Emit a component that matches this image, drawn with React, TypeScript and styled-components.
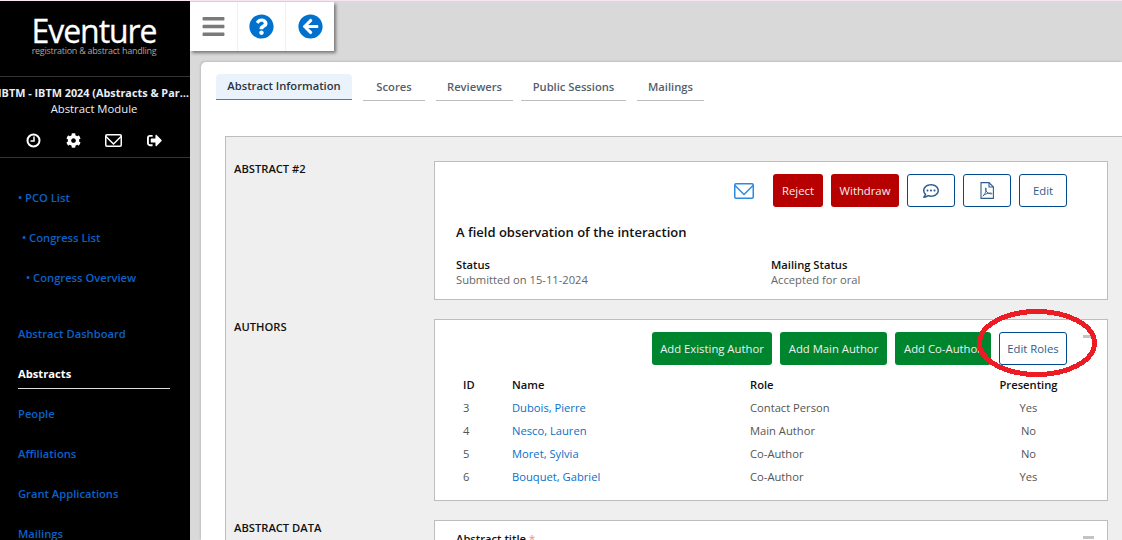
import React from 'react';
import styled, { createGlobalStyle } from 'styled-components';
import {
  FaBars,
  FaQuestionCircle,
  FaArrowCircleLeft,
  FaCog,
  FaSignOutAlt,
  FaRegCommentDots,
} from 'react-icons/fa';

const GlobalStyle = createGlobalStyle`
  html, body {
    margin: 0;
    padding: 0;
    height: 540px;
    overflow: hidden;
    background: #d9d9d9;
    font-family: "Open Sans", "Liberation Sans", sans-serif;
  }
  * { box-sizing: border-box; }
`;

const Page = styled.div`
  display: flex;
  width: 1122px;
  height: 540px;
  overflow: hidden;
  border-top: 1px solid #f5e6f2;
  position: relative;
`;

const Sidebar = styled.aside`
  width: 190px;
  flex: none;
  background: #000;
  color: #fff;
  display: flex;
  flex-direction: column;
  overflow: hidden;
  & > * { flex: none; }
`;

const LogoBlock = styled.div`
  height: 76px;
  border-bottom: 1px solid #333;
  display: flex;
  flex-direction: column;
  align-items: center;
  padding: 15px 2px 0 0;
`;

const LogoName = styled.div`
  font-size: 32px;
  line-height: 29px;
  letter-spacing: -1.05px;
  -webkit-text-stroke: 0.3px #fff;
  color: #fff;
`;

const LogoSub = styled.div`
  font-size: 9px;
  line-height: 11px;
  letter-spacing: -0.25px;
  color: #a6a6a6;
`;

const CongressTitle = styled.div`
  margin: 8px 0 0 -2px;
  font-size: 10.85px;
  line-height: 16px;
  font-weight: 700;
  white-space: nowrap;
  overflow: hidden;
  text-overflow: ellipsis;
  color: #e8eef8;
`;

const ModuleName = styled.div`
  text-align: center;
  font-size: 11.3px;
  line-height: 16px;
  margin-left: -2px;
  color: #e8eef8;
`;

const IconRow = styled.div`
  height: 41px;
  padding: 6px 28px 0 26px;
  border-bottom: 1px solid #333;
  display: flex;
  align-items: center;
  justify-content: space-between;
  font-size: 15px;
  color: #fff;
`;

const Nav = styled.nav`
  display: flex;
  flex-direction: column;
  padding-top: 20px;
`;

const NavItem = styled.a<{ $indent?: number; $active?: boolean; $gap?: boolean }>`
  display: block;
  height: ${(p) => (p.$active ? '35px' : '40px')};
  line-height: 40px;
  font-size: 11.2px;
  font-weight: ${(p) => (p.$active ? 700 : 600)};
  color: ${(p) => (p.$active ? '#fff' : '#0a62c9')};
  margin-left: ${(p) => 18 + (p.$indent || 0)}px;
  margin-top: ${(p) => (p.$gap ? '16px' : '0')};
  margin-bottom: ${(p) => (p.$active ? '5px' : '0')};
  width: ${(p) => (p.$active ? '152px' : 'auto')};
  border-bottom: ${(p) => (p.$active ? '1px solid #ddd' : 'none')};
`;

const Main = styled.main`
  flex: 1;
  min-width: 0;
  background: #d9d9d9;
  display: flex;
  flex-direction: column;
`;

const Toolbar = styled.div`
  width: 144px;
  height: 49px;
  flex: none;
  margin-top: 1px;
  background: #fff;
  display: flex;
  box-shadow: 2px 2px 3px rgba(0, 0, 0, 0.45);
`;

const ToolButton = styled.div<{ $color: string }>`
  width: 48px;
  display: flex;
  align-items: center;
  justify-content: center;
  color: ${(p) => p.$color};
  border-right: 1px solid #f0f0f0;
  font-size: 25px;
  &:last-child { border-right: none; }
`;

const Card = styled.div`
  margin: 11px 0 0 11px;
  flex: 1;
  background: #fff;
  border-radius: 5px 0 0 0;
  padding: 12px 0 0 15px;
  box-shadow: -1px -1px 2px rgba(0, 0, 0, 0.12);
  min-height: 0;
`;

const Tabs = styled.div`
  display: flex;
  height: 27px;
`;

const Tab = styled.div<{ $active?: boolean; $gap?: number; $width: number }>`
  width: ${(p) => p.$width}px;
  margin-right: ${(p) => p.$gap ?? 11}px;
  height: ${(p) => (p.$active ? '26px' : '27px')};
  line-height: ${(p) => (p.$active ? '24px' : '26px')};
  text-align: center;
  font-size: 11.2px;
  font-weight: 600;
  white-space: nowrap;
  color: ${(p) => (p.$active ? '#2a3440' : '#55606c')};
  background: ${(p) => (p.$active ? '#eaf3fb' : 'transparent')};
  border-bottom: 1px solid ${(p) => (p.$active ? '#2b84d0' : '#bdbdbd')};
  border-radius: 4px 4px 0 0;
`;

const GrayPanel = styled.div`
  margin: 35px 0 0 9px;
  background: #efefef;
  border: 1px solid #bdbdbd;
  border-right: none;
  padding: 24px 14px 0 8px;
  display: flex;
  flex-direction: column;
  gap: 19px;
`;

const Section = styled.section`
  display: flex;
`;

const SectionLabel = styled.div`
  width: 200px;
  flex: none;
  font-size: 11.2px;
  line-height: 16px;
  font-weight: 600;
  color: #111;
`;

const Box = styled.div<{ $height: number }>`
  position: relative;
  width: 674px;
  height: ${(p) => p.$height}px;
  background: #fff;
  border: 1px solid #bdbdbd;
`;

const AbstractBox = styled(Box)`
  padding: 12px 40px 0 21px;
`;

const ActionRow = styled.div`
  display: flex;
  justify-content: flex-end;
  align-items: center;
  gap: 8px;
`;

const ActionButton = styled.div<{ $kind: 'red' | 'green' | 'outline'; $width: number }>`
  height: 33px;
  width: ${(p) => p.$width}px;
  display: flex;
  align-items: center;
  justify-content: center;
  border-radius: 3px;
  font-size: 11.3px;
  white-space: nowrap;
  background: ${(p) => (p.$kind === 'red' ? '#b70000' : p.$kind === 'green' ? '#00852f' : '#fff')};
  color: ${(p) => (p.$kind === 'outline' ? '#2f5d8c' : '#f0f0f0')};
  border: 1px solid ${(p) => (p.$kind === 'outline' ? '#004b8d' : 'transparent')};
`;

const MailIcon = styled.div`
  margin-right: 11px;
  color: #2b8ae0;
  display: flex;
`;

const AbstractTitle = styled.div`
  margin-top: 16px;
  font-size: 13px;
  line-height: 18px;
  font-weight: 600;
  color: #111;
`;

const StatusGrid = styled.div`
  margin-top: 16px;
  display: grid;
  grid-template-columns: 315px 1fr;
`;

const StatusLabel = styled.div`
  font-size: 11.2px;
  line-height: 15px;
  font-weight: 600;
  color: #111;
`;

const StatusValue = styled.div`
  font-size: 11.2px;
  line-height: 15px;
  color: #666;
`;

const AuthorsBox = styled(Box)`
  padding: 12px 40px 0 0;
`;

const Collapse = styled.div`
  position: absolute;
  right: 13px;
  top: 15px;
  width: 11px;
  height: 3px;
  background: #c4c4c4;
`;

const AuthorTable = styled.table`
  margin: 8px 0 0 18px;
  border-collapse: collapse;
  table-layout: fixed;
  width: 646px;
  font-size: 11.2px;
`;

const Head = styled.th<{ $width: number; $center?: boolean }>`
  width: ${(p) => p.$width}px;
  height: 23px;
  padding: 0 0 0 ${(p) => (p.$center ? 0 : 10)}px;
  text-align: ${(p) => (p.$center ? 'center' : 'left')};
  font-weight: 600;
  color: #111;
`;

const Cell = styled.td<{ $center?: boolean }>`
  height: 23px;
  padding: 0 0 0 ${(p) => (p.$center ? 0 : 10)}px;
  text-align: ${(p) => (p.$center ? 'center' : 'left')};
  color: #555;
`;

const AuthorLink = styled.a`
  color: #0a6fc9;
`;

const FieldLabel = styled.div`
  padding: 10px 0 0 21px;
  font-size: 11.2px;
  font-weight: 600;
  line-height: 16px;
  color: #111;
  span { color: #e88; font-weight: 400; }
`;

const RedCircle = styled.svg`
  position: absolute;
  left: 972px;
  top: 304px;
  width: 130px;
  height: 76px;
  pointer-events: none;
`;

const ClockIcon = () => (
  <svg width="15" height="15" viewBox="0 0 15 15" fill="none" stroke="currentColor" strokeWidth="2">
    <circle cx="7.5" cy="7.5" r="6" />
    <path d="M8 3.5v4.5H4.5" strokeWidth="1.5" />
  </svg>
);

const EnvelopeIcon = ({ w, h }: { w: number; h: number }) => (
  <svg width={w} height={h} viewBox={`0 0 ${w} ${h}`} fill="none" stroke="currentColor" strokeWidth="1.5">
    <rect x="0.75" y="0.75" width={w - 1.5} height={h - 1.5} rx="1.2" />
    <path d={`M1 2.5l${w / 2 - 1} ${h / 2 + 1}l${w / 2 - 1} -${h / 2 + 1}`} />
  </svg>
);

const PdfIcon = () => (
  <svg width="14" height="17" viewBox="0 0 14 17" fill="none" stroke="currentColor" strokeWidth="1.1">
    <path d="M1 .6h8l4.4 4.4v11.4H1z" />
    <path d="M9 .6v4.4h4.4" />
    <path d="M2.6 14.2c2-1 3.4-4 3.6-7.6 .1-1-.9-1-.8.2 .3 2.4 2 4.8 5.6 5.2 1.2 .1 1.2-1-.2-1-2.2 0-5.2 .8-7.6 2.4" strokeWidth="0.9" />
  </svg>
);

const authors = [
  { id: 3, name: 'Dubois, Pierre', role: 'Contact Person', presenting: 'Yes' },
  { id: 4, name: 'Nesco, Lauren', role: 'Main Author', presenting: 'No' },
  { id: 5, name: 'Moret, Sylvia', role: 'Co-Author', presenting: 'No' },
  { id: 6, name: 'Bouquet, Gabriel', role: 'Co-Author', presenting: 'Yes' },
];

export default function App() {
  return (
    <Page>
      <GlobalStyle />
      <Sidebar>
        <LogoBlock>
          <LogoName>Eventure</LogoName>
          <LogoSub>registration &amp; abstract handling</LogoSub>
        </LogoBlock>
        <CongressTitle>IBTM - IBTM 2024 (Abstracts &amp; Participants)</CongressTitle>
        <ModuleName>Abstract Module</ModuleName>
        <IconRow>
          <ClockIcon />
          <FaCog />
          <EnvelopeIcon w={17} h={13} />
          <FaSignOutAlt />
        </IconRow>
        <Nav>
          <NavItem>• PCO List</NavItem>
          <NavItem $indent={4}>• Congress List</NavItem>
          <NavItem $indent={8}>• Congress Overview</NavItem>
          <NavItem $gap>Abstract Dashboard</NavItem>
          <NavItem $active>Abstracts</NavItem>
          <NavItem>People</NavItem>
          <NavItem>Affiliations</NavItem>
          <NavItem>Grant Applications</NavItem>
          <NavItem>Mailings</NavItem>
        </Nav>
      </Sidebar>
      <Main>
        <Toolbar>
          <ToolButton $color="#7a7a7a"><FaBars /></ToolButton>
          <ToolButton $color="#0072ce"><FaQuestionCircle /></ToolButton>
          <ToolButton $color="#0072ce"><FaArrowCircleLeft /></ToolButton>
        </Toolbar>
        <Card>
          <Tabs>
            <Tab $active $width={136}>Abstract Information</Tab>
            <Tab $width={62}>Scores</Tab>
            <Tab $width={77} $gap={8}>Reviewers</Tab>
            <Tab $width={105}>Public Sessions</Tab>
            <Tab $width={67}>Mailings</Tab>
          </Tabs>
          <GrayPanel>
            <Section>
              <SectionLabel>ABSTRACT #2</SectionLabel>
              <AbstractBox $height={139}>
                <ActionRow>
                  <MailIcon><EnvelopeIcon w={20} h={16} /></MailIcon>
                  <ActionButton $kind="red" $width={50}>Reject</ActionButton>
                  <ActionButton $kind="red" $width={68}>Withdraw</ActionButton>
                  <ActionButton $kind="outline" $width={48}><FaRegCommentDots size={16} /></ActionButton>
                  <ActionButton $kind="outline" $width={48}><PdfIcon /></ActionButton>
                  <ActionButton $kind="outline" $width={48}>Edit</ActionButton>
                </ActionRow>
                <AbstractTitle>A field observation of the interaction</AbstractTitle>
                <StatusGrid>
                  <StatusLabel>Status</StatusLabel>
                  <StatusLabel>Mailing Status</StatusLabel>
                  <StatusValue>Submitted on 15-11-2024</StatusValue>
                  <StatusValue>Accepted for oral</StatusValue>
                </StatusGrid>
              </AbstractBox>
            </Section>
            <Section>
              <SectionLabel>AUTHORS</SectionLabel>
              <AuthorsBox $height={182}>
                <ActionRow>
                  <ActionButton $kind="green" $width={120}>Add Existing Author</ActionButton>
                  <ActionButton $kind="green" $width={107}>Add Main Author</ActionButton>
                  <ActionButton $kind="green" $width={96}>Add Co-Author</ActionButton>
                  <ActionButton $kind="outline" $width={68}>Edit Roles</ActionButton>
                </ActionRow>
                <Collapse />
                <AuthorTable>
                  <thead>
                    <tr>
                      <Head $width={49}>ID</Head>
                      <Head $width={238}>Name</Head>
                      <Head $width={218}>Role</Head>
                      <Head $width={141} $center>Presenting</Head>
                    </tr>
                  </thead>
                  <tbody>
                    {authors.map((a) => (
                      <tr key={a.id}>
                        <Cell>{a.id}</Cell>
                        <Cell><AuthorLink>{a.name}</AuthorLink></Cell>
                        <Cell>{a.role}</Cell>
                        <Cell $center>{a.presenting}</Cell>
                      </tr>
                    ))}
                  </tbody>
                </AuthorTable>
              </AuthorsBox>
            </Section>
            <Section>
              <SectionLabel>ABSTRACT DATA</SectionLabel>
              <Box $height={100}>
                <FieldLabel>Abstract title <span>*</span></FieldLabel>
                <Collapse />
              </Box>
            </Section>
          </GrayPanel>
        </Card>
      </Main>
      <RedCircle viewBox="0 0 130 76" shapeRendering="crispEdges">
        <ellipse cx="65" cy="38" rx="57.5" ry="31.5" fill="none" stroke="#ed1c24" strokeWidth="5" />
      </RedCircle>
    </Page>
  );
}
